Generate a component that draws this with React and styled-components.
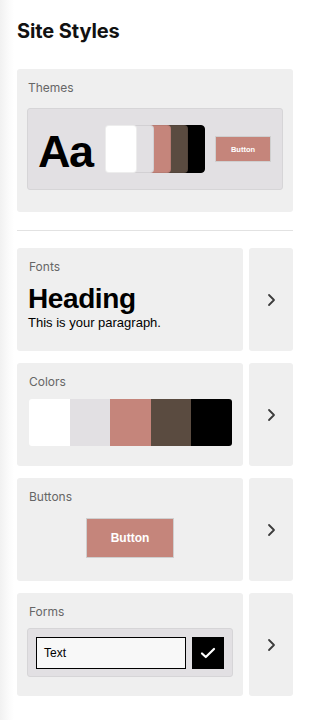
import React from 'react';
import styled, { createGlobalStyle } from 'styled-components';

const GlobalStyle = createGlobalStyle`
  html, body { margin: 0; padding: 0; }
  body {
    background: linear-gradient(to right, #f1f1f1 0, #fafafa 8px, #fff 14px);
    font-family: Inter, "Liberation Sans", sans-serif;
    min-height: 720px;
  }
`;

const swatches = ['#ffffff', '#e2e0e3', '#c5857b', '#5a4b40', '#000000'];

function Chevron() {
  return (
    <svg width="10" height="14" viewBox="0 0 10 14" fill="none">
      <path d="M3 2l5 5-5 5" stroke="#3c3c3c" strokeWidth="1.8" strokeLinecap="round" strokeLinejoin="round" />
    </svg>
  );
}

function Check() {
  return (
    <svg width="16" height="12" viewBox="0 0 16 12" fill="none">
      <path d="M2 6.5l3.8 3.5L14 2" stroke="#fff" strokeWidth="2.2" strokeLinecap="round" strokeLinejoin="round" />
    </svg>
  );
}

export default function App() {
  return (
    <>
      <GlobalStyle />
      <Page>
        <Title>Site Styles</Title>

        <ThemeCard>
          <Label>Themes</Label>
          <Preview>
            <BigAa>Aa</BigAa>
            <Stack>
              {swatches.map((c, i) => (
                <StackCard key={c} color={c} z={swatches.length - i} />
              ))}
            </Stack>
            <MiniButton>Button</MiniButton>
          </Preview>
        </ThemeCard>

        <Divider />

        <Rows>
          <Row>
            <Card>
              <Label>Fonts</Label>
              <Heading>Heading</Heading>
              <Para>This is your paragraph.</Para>
            </Card>
            <ArrowCard><Chevron /></ArrowCard>
          </Row>

          <Row>
            <Card>
              <Label>Colors</Label>
              <Strip>
                {swatches.map((c) => (
                  <StripCell key={c} color={c} />
                ))}
              </Strip>
            </Card>
            <ArrowCard><Chevron /></ArrowCard>
          </Row>

          <Row>
            <Card>
              <Label>Buttons</Label>
              <Center>
                <SampleButton>Button</SampleButton>
              </Center>
            </Card>
            <ArrowCard><Chevron /></ArrowCard>
          </Row>

          <Row>
            <Card>
              <Label>Forms</Label>
              <FormBox>
                <TextField>Text</TextField>
                <CheckBox><Check /></CheckBox>
              </FormBox>
            </Card>
            <ArrowCard><Chevron /></ArrowCard>
          </Row>
        </Rows>
      </Page>
    </>
  );
}

const Page = styled.div`
  width: 276px;
  padding: 19px 0 24px 17px;
`;

const Title = styled.h1`
  margin: 0;
  font-size: 20px;
  line-height: 24px;
  font-weight: 700;
  color: #111;
  letter-spacing: -0.1px;
`;

const ThemeCard = styled.div`
  margin-top: 26px;
  background: #efefef;
  border-radius: 3px;
  padding: 12px 10px 22px 10px;
`;

const Label = styled.div`
  font-size: 12px;
  line-height: 14px;
  color: #666;
  padding-left: 1px;
`;

const Preview = styled.div`
  margin-top: 13px;
  height: 80px;
  background: #e2e0e3;
  border: 1px solid #d6d5d7;
  border-radius: 3px;
  display: flex;
  align-items: center;
  padding-left: 10px;
`;

const BigAa = styled.div`
  font-family: "Liberation Sans", Arial, sans-serif;
  font-weight: 700;
  font-size: 45px;
  line-height: 1;
  letter-spacing: -1.5px;
  color: #000;
  width: 56px;
  margin-top: 4px;
`;

const Stack = styled.div`
  display: flex;
  margin-left: 11px;
`;

const StackCard = styled.div`
  position: relative;
  box-sizing: border-box;
  width: 32px;
  height: 48px;
  border-radius: 4px;
  border: 1px solid ${(p) => (p.color === '#000000' ? '#000' : 'rgba(0, 0, 0, 0.07)')};
  background: ${(p) => p.color};
  z-index: ${(p) => p.z};
  & + & { margin-left: -15px; }
`;

const MiniButton = styled.div`
  margin-left: 10px;
  width: 54px;
  height: 24px;
  background: #c5857b;
  border: 1px solid #cfcfcf;
  color: #fff;
  font-family: "Liberation Sans", Arial, sans-serif;
  font-weight: 700;
  font-size: 7.5px;
  display: flex;
  align-items: center;
  justify-content: center;
`;

const Divider = styled.div`
  margin-top: 18px;
  height: 1px;
  background: #e2e2e2;
`;

const Rows = styled.div`
  margin-top: 17px;
  display: flex;
  flex-direction: column;
  gap: 12px;
`;

const Row = styled.div`
  display: grid;
  grid-template-columns: 226px 44px;
  gap: 6px;
  height: 103px;
`;

const Card = styled.div`
  background: #efefef;
  border-radius: 3px;
  padding: 12px 11px 0 11px;
`;

const ArrowCard = styled.div`
  background: #efefef;
  border-radius: 3px;
  display: flex;
  align-items: center;
  justify-content: center;
`;

const Heading = styled.div`
  margin-top: 11px;
  font-family: "Liberation Sans", Arial, sans-serif;
  font-weight: 700;
  font-size: 28px;
  line-height: 28px;
  letter-spacing: -0.4px;
  color: #000;
`;

const Para = styled.div`
  margin-top: 2px;
  font-family: "Liberation Sans", Arial, sans-serif;
  font-size: 13px;
  line-height: 16px;
  color: #000;
`;

const Strip = styled.div`
  margin-top: 10px;
  margin-left: 1px;
  display: flex;
  height: 47px;
  width: 203px;
  border-radius: 3px;
  overflow: hidden;
`;

const StripCell = styled.div`
  flex: 1;
  background: ${(p) => p.color};
`;

const Center = styled.div`
  margin-top: 14px;
  display: flex;
  justify-content: center;
`;

const SampleButton = styled.div`
  width: 86px;
  height: 38px;
  background: #c5857b;
  border: 1px solid #cfcfcf;
  color: #fff;
  font-family: "Liberation Sans", Arial, sans-serif;
  font-weight: 700;
  font-size: 12px;
  display: flex;
  align-items: center;
  justify-content: center;
`;

const FormBox = styled.div`
  margin-top: 9px;
  margin-left: -1px;
  width: 188px;
  height: 47px;
  padding: 0 8px;
  background: #e2e0e3;
  border: 1px solid #d6d5d7;
  border-radius: 3px;
  display: flex;
  align-items: center;
  gap: 6px;
`;

const TextField = styled.div`
  box-sizing: border-box;
  width: 150px;
  height: 32px;
  background: #f8f8f8;
  border: 1px solid #000;
  padding-left: 7px;
  display: flex;
  align-items: center;
  font-family: "Liberation Sans", Arial, sans-serif;
  font-size: 12px;
  color: #000;
`;

const CheckBox = styled.div`
  width: 32px;
  height: 32px;
  background: #000;
  display: flex;
  align-items: center;
  justify-content: center;
`;
